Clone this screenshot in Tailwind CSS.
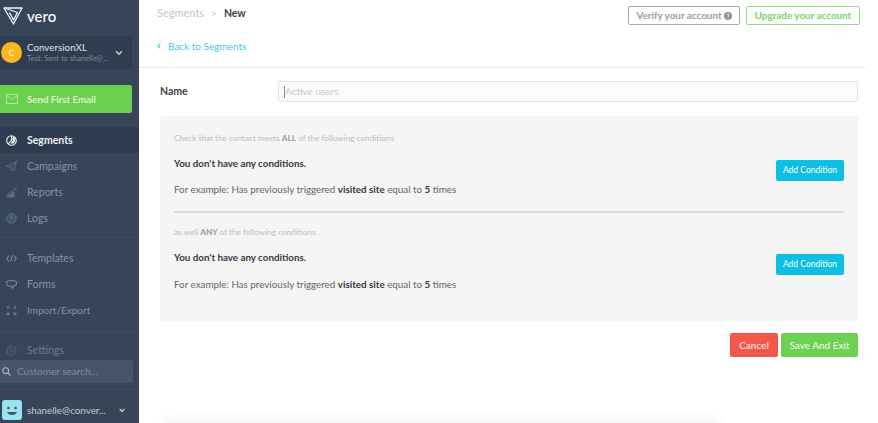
<!DOCTYPE html>
<html lang="en">
<head>
    <meta charset="UTF-8">
    <meta name="viewport" content="width=device-width, initial-scale=1.0">
    <title>New Segment - Vero</title>
    <script src="https://cdn.jsdelivr.net/npm/@tailwindcss/browser@4"></script>
</head>
<body class="bg-white font-['Lato','Liberation_Sans',sans-serif] overflow-hidden">
<div class="flex h-[423px] w-[878px] overflow-hidden">
    <!-- sidebar -->
    <aside class="w-[139px] h-full shrink-0 overflow-hidden bg-[#374559] flex flex-col text-[#8593a5] text-[10.5px]">
        <div class="h-[36px] shrink-0 pl-[3px] pb-[4px] flex items-center gap-[4px] text-white">
            <svg class="w-[20px] h-[18px]" viewBox="0 0 20 18" fill="none" stroke="#f4f6f8" stroke-width="1.3" stroke-linejoin="round"><path d="M1 1H19L10.5 17Z"/><path d="M1 1L14.5 5.5L10.5 13L6.5 5.5"/></svg>
            <span class="text-[15px] font-medium leading-none">vero</span>
        </div>
        <div class="shrink-0 mr-[7px] h-[33px] rounded-r-[3px] bg-[#303d50] flex items-center pl-[1px] pr-[9px]">
            <span class="w-[21px] h-[21px] rounded-full bg-[#fbb81c] text-white text-[8px] flex items-center justify-center shrink-0">C</span>
            <div class="ml-[5px] flex-1 min-w-0">
                <p class="text-[#dfe4ea] text-[9.8px] leading-[13px]">ConversionXL</p>
                <p class="text-[#7c8a9c] text-[7.5px] leading-[10px] whitespace-nowrap">Test: Sent to shanelle@...</p>
            </div>
            <svg class="w-[8px] h-[6px]" viewBox="0 0 8 6" fill="none" stroke="#cbd2db" stroke-width="1.5"><path d="M1 1.2L4 4.2L7 1.2"/></svg>
        </div>
        <div class="shrink-0 mt-[16px] mr-[7px] h-[28px] rounded-r-[2px] bg-[#6bd04f] flex items-center pl-[6px] text-[#d9f5cf] text-[9.7px] font-bold">
            <svg class="w-[12px] h-[10px] mr-[9px]" viewBox="0 0 12 10" fill="none" stroke="#b5eca5" stroke-width="0.9"><rect x="0.5" y="0.5" width="11" height="9"/><path d="M0.5 1L6 5.5L11.5 1"/></svg>
            Send First Email
        </div>
        <nav class="mt-[14px] shrink-0 flex flex-col">
            <a class="h-[26px] pt-[1px] bg-[#2f3c4f] flex items-center pl-[6px] text-[#eef1f4] font-bold">
                <svg class="w-[11px] h-[11px] mr-[10px]" viewBox="0 0 11 11" fill="none" stroke="#eef1f4" stroke-width="1.1"><circle cx="5.5" cy="5.5" r="4.8"/><path d="M5.5 1V5.5L2.2 8.8" /><path d="M6.5 1.5C9 2 10 4.5 9 6.5C8 8.5 6 9 4.5 8.5L6.5 6.2Z" fill="#eef1f4" stroke="none"/></svg>Segments</a>
            <a class="h-[26px] pt-[1px] flex items-center pl-[6px]">
                <svg class="w-[11px] h-[11px] mr-[10px]" viewBox="0 0 11 11" fill="none" stroke="#5c6b7e" stroke-width="1" stroke-linejoin="round"><path d="M0.5 5.2L10.5 0.5L7.8 10L5.2 6.6L0.5 5.2Z"/><path d="M10.5 0.5L5.2 6.6V9.8"/></svg>Campaigns</a>
            <a class="h-[26px] pt-[1px] flex items-center pl-[6px]">
                <svg class="w-[11px] h-[11px] mr-[10px]" viewBox="0 0 11 11" fill="#5c6b7e"><path d="M0.5 10.5V8H2.5V7H4.5V5.5H6.5V4.5H8.5V10.5Z"/><path d="M1 7L7.5 2.8" stroke="#5c6b7e" stroke-width="0.7"/><circle cx="9.5" cy="1.8" r="1.2"/></svg>Reports</a>
            <a class="h-[26px] pt-[1px] flex items-center pl-[6px]">
                <svg class="w-[11px] h-[11px] mr-[10px]" viewBox="0 0 11 11" fill="#46566a" stroke="#5c6b7e" stroke-width="1"><circle cx="5.5" cy="5.5" r="4.8"/><path d="M5.5 1.5V6.5" fill="none"/></svg>Logs</a>
        </nav>
        <div class="shrink-0 mt-[6px] mb-[7px] border-t border-[#3f4e62]"></div>
        <nav class="shrink-0 flex flex-col">
            <a class="h-[26px] pt-[1px] flex items-center pl-[6px]">
                <svg class="w-[11px] h-[11px] mr-[10px]" viewBox="0 0 11 11" fill="none" stroke="#7a899c" stroke-width="1.1"><path d="M3 2.5L0.8 5.5L3 8.5M8 2.5L10.2 5.5L8 8.5M6.4 1.8L4.6 9.2"/></svg>Templates</a>
            <a class="h-[26px] pt-[1px] flex items-center pl-[6px]">
                <svg class="w-[11px] h-[11px] mr-[10px]" viewBox="0 0 11 11" fill="none" stroke="#7a899c" stroke-width="1.1" stroke-linejoin="round"><path d="M3 1.8H8A2.6 2.6 0 0 1 8 7H6.8V9.5L4.6 7H3A2.6 2.6 0 0 1 3 1.8Z"/></svg>Forms</a>
            <a class="h-[26px] flex items-center pl-[6px] text-[10px]">
                <svg class="w-[11px] h-[11px] mr-[10px]" viewBox="0 0 11 11" fill="#6a798c"><path d="M2 0.5L3.5 2.5H2.6V4H1.4V2.5H0.5Z"/><path d="M9 0.5L10.5 2.5H9.6V4H8.4V2.5H7.5Z"/><circle cx="2" cy="8.8" r="1.6"/><circle cx="9" cy="8.8" r="1.6"/></svg>Import/Export</a>
        </nav>
        <div class="shrink-0 mt-[8px] mb-[8px] border-t border-[#3f4e62]"></div>
        <a class="shrink-0 h-[20px] pt-[1px] flex items-center pl-[6px] text-[#6d7b8e]">
            <svg class="w-[11px] h-[11px] mr-[10px]" viewBox="0 0 11 11" fill="none" stroke="#566579" stroke-width="1"><circle cx="5.5" cy="5.5" r="1.8"/><path d="M5.5 0.6L9.8 3V8L5.5 10.4L1.2 8V3Z" stroke-linejoin="round"/></svg>Settings</a>
        <div class="shrink-0 mr-[6px] h-[23px] bg-[#465569] rounded-r-[2px] flex items-center pl-[2px] text-[#7f8da0] text-[10px]">
            <svg class="w-[9px] h-[9px] mr-[6px]" viewBox="0 0 9 9" fill="none" stroke="#aab4c1" stroke-width="1.1"><circle cx="3.7" cy="3.7" r="2.9"/><path d="M6 6L8.5 8.5"/></svg>
            Customer search...
        </div>
        <div class="shrink-0 mt-[6px] border-t border-[#3f4e62]"></div>
        <div class="shrink-0 flex items-center h-[40px] pl-[2px]">
            <svg class="w-[20px] h-[20px] shrink-0" viewBox="0 0 20 20"><rect width="20" height="20" rx="3" fill="#9be3ee"/><circle cx="6.5" cy="8" r="1.3" fill="#3c5a6c"/><circle cx="13.5" cy="8" r="1.3" fill="#3c5a6c"/><path d="M5 12H15C14 16 6 16 5 12Z" fill="#3c5a6c"/></svg>
            <span class="ml-[5px] text-[#c3cbd5] text-[9.8px]">shanelle@conver...</span>
            <svg class="w-[6px] h-[5px] ml-[13px]" viewBox="0 0 6 5" fill="none" stroke="#cbd2db" stroke-width="1.3"><path d="M0.7 1L3 3.4L5.3 1"/></svg>
        </div>
    </aside>

    <!-- main -->
    <main class="w-[727px] shrink-0 flex flex-col overflow-hidden">
        <header class="h-[68px] shrink-0 border-b border-[#e9ecee] pl-[18px] pr-[6px] flex flex-col">
            <div class="flex items-start justify-between pt-[6px]">
                <div class="flex items-center gap-[7px] text-[10.5px] h-[14px]">
                    <span class="text-[#c1c6ca] text-[11px]">Segments</span>
                    <span class="text-[#c1c6ca] text-[10px]">&gt;</span>
                    <span class="text-[#3c444c] font-bold pt-[1px]">New</span>
                </div>
                <div class="flex items-center gap-[6px]">
                    <button class="w-[112px] h-[19px] border border-[#a9acb0] rounded-[2px] text-[#9a9da1] text-[9.9px] font-bold flex items-center justify-center gap-[2px]">Verify your account
                        <svg class="w-[8px] h-[8px]" viewBox="0 0 8 8"><circle cx="4" cy="4" r="4" fill="#8e9195"/><path d="M2.8 3.1C2.9 1.8 5.2 1.8 5.2 3.1C5.2 4 4 4 4 5" fill="none" stroke="#fff" stroke-width="0.8"/><circle cx="4" cy="6.2" r="0.5" fill="#fff"/></svg>
                    </button>
                    <button class="w-[114px] h-[19px] border border-[#8fdf7b] rounded-[2px] text-[#79d562] text-[9.9px] font-bold">Upgrade your account</button>
                </div>
            </div>
            <a class="mt-[14px] flex items-center text-[#49c8e4] text-[10px] h-[14px]">
                <svg class="w-[4px] h-[6px] mr-[7px]" viewBox="0 0 4 6" fill="none" stroke="#49c8e4" stroke-width="1.1"><path d="M3.3 0.6L1 3L3.3 5.4"/></svg>
                Back to Segments
            </a>
        </header>
        <div class="shrink-0 pl-[21px] pr-[8px] flex flex-col">
            <div class="flex items-center mt-[13px]">
                <label class="w-[118px] text-[#3c444c] text-[10.5px] font-bold">Name</label>
                <div class="flex-1 h-[21px] border border-[#e2e4e6] rounded-[2px] bg-[#fbfbfb] flex items-center pl-[5px] text-[#c5c8cb] text-[10px]"><span class="w-px h-[12px] bg-[#8a8f94]"></span>Active users</div>
            </div>
            <section class="mt-[14px] h-[205px] bg-[#f5f5f5] rounded-[2px] px-[14px] pt-[16px] text-[#5f666d]">
                <p class="text-[#b9bdc0] text-[8.2px] leading-[12px]">Check that the contact meets <b class="text-[#989ca0]">ALL</b> of the following conditions</p>
                <div class="flex items-start justify-between mt-[12px]">
                    <div>
                        <p class="text-[#333b43] text-[9.8px] font-bold leading-[14px]">You don't have any conditions.</p>
                        <p class="text-[9.8px] leading-[14px] mt-[12px]">For example: Has previously triggered <b class="text-[#333b43]">visited site</b> equal to <b class="text-[#333b43]">5</b> times</p>
                    </div>
                    <button class="w-[68px] h-[21px] mt-[4px] bg-[#0dbfe3] rounded-[2px] text-white text-[8.5px]">Add Condition</button>
                </div>
                <div class="mt-[15px] border-t-2 border-[#dcdedf]"></div>
                <p class="mt-[13px] text-[#b9bdc0] text-[8.2px] leading-[12px]">as well <b class="text-[#989ca0]">ANY</b> of the following conditions</p>
                <div class="flex items-start justify-between mt-[12px]">
                    <div>
                        <p class="text-[#333b43] text-[9.8px] font-bold leading-[14px]">You don't have any conditions.</p>
                        <p class="text-[9.8px] leading-[14px] mt-[13px]">For example: Has previously triggered <b class="text-[#333b43]">visited site</b> equal to <b class="text-[#333b43]">5</b> times</p>
                    </div>
                    <button class="w-[68px] h-[21px] mt-[4px] bg-[#0dbfe3] rounded-[2px] text-white text-[8.5px]">Add Condition</button>
                </div>
            </section>
            <div class="mt-[12px] flex justify-end gap-[3px]">
                <button class="w-[48px] h-[24px] bg-[#f2574c] rounded-[2px] text-[#ffe9e6] text-[10px] font-medium">Cancel</button>
                <button class="w-[77px] h-[24px] bg-[#6dd152] rounded-[2px] text-[#eefbe9] text-[10px] font-medium">Save And Exit</button>
            </div>
        </div>
        <div class="shrink-0 mt-[67px] ml-[30px] w-[545px] h-[20px] bg-[#f0f0f0] shadow-[0_0_12px_5px_rgba(0,0,0,0.05)]"></div>
    </main>
</div>
</body>
</html>
